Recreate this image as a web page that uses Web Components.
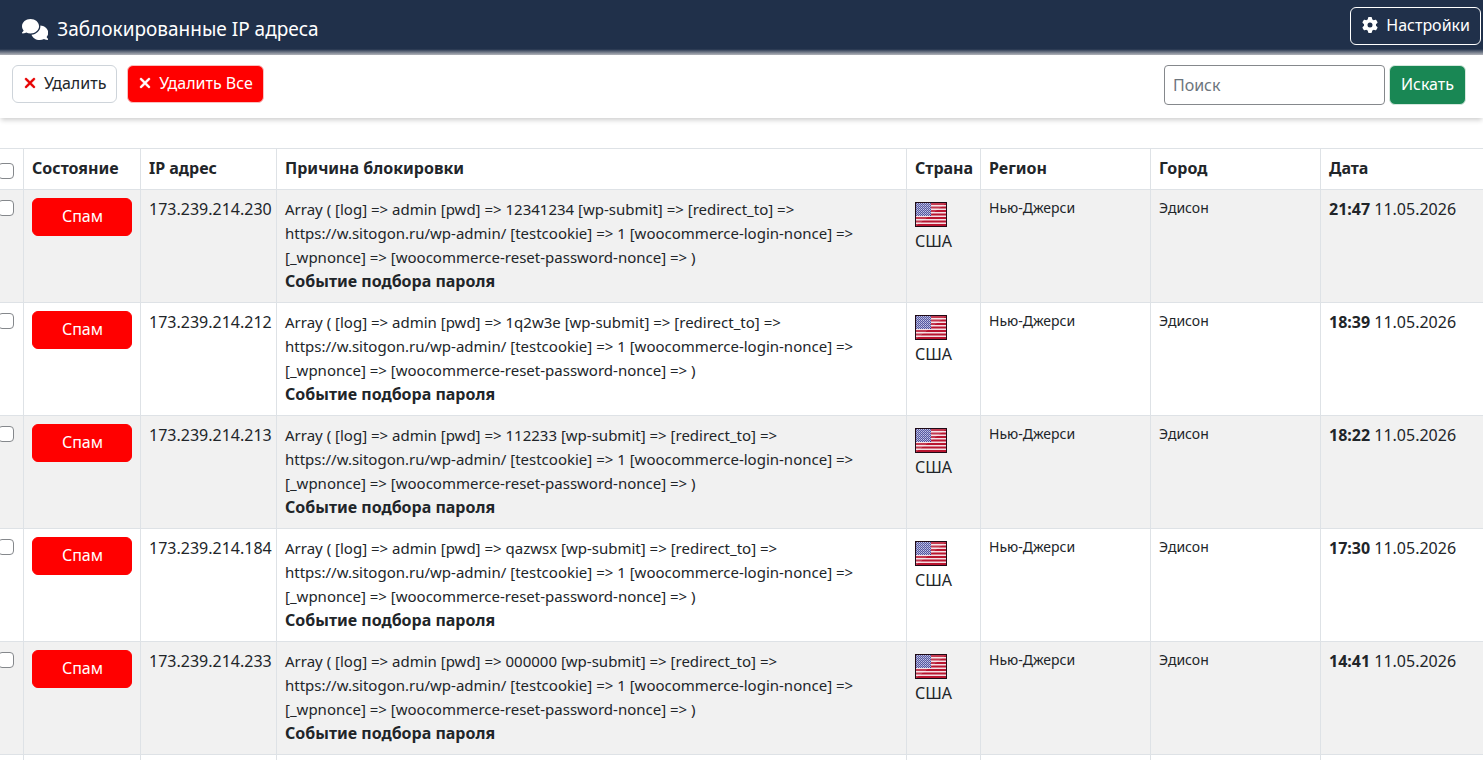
<!DOCTYPE html>
<html lang="ru">
<head>
<meta charset="utf-8">
<meta name="viewport" content="width=device-width, initial-scale=1">
<title>Заблокированные IP адреса</title>
<style>
  body {
    margin: 0;
    background: #fff;
    color: #212529;
    font: 16px/24px "Noto Sans", "Liberation Sans", sans-serif;
  }
</style>
</head>
<body>
<blocked-ip-page></blocked-ip-page>

<script>
const define = (name, html, setup) => {
  const template = document.createElement('template');
  template.innerHTML = html;
  customElements.define(name, class extends HTMLElement {
    constructor() {
      super();
      this.attachShadow({ mode: 'open' }).append(template.content.cloneNode(true));
    }
    connectedCallback() {
      if (setup) setup(this, this.shadowRoot);
    }
  });
};

/* Icons */
const icons = {
  comments: ['0 0 640 512', 'M208 352c114.9 0 208-78.8 208-176S322.9 0 208 0S0 78.800 0 176c0 38.600 14.700 74.300 39.600 103.400c-3.500 9.400-8.700 17.700-14.200 24.700c-4.800 6.200-9.700 11-13.300 14.300c-1.800 1.600-3.300 2.900-4.300 3.700c-.5 .4-.9 .7-1.100 .8l-.2 .2C1 327.200-1.400 334.400 .8 340.900S9.100 352 16 352c21.800 0 43.800-5.600 62.100-12.500c9.200-3.500 17.800-7.400 25.200-11.400C134.100 343.300 169.800 352 208 352zM448 176c0 112.300-99.100 196.900-216.500 207C255.800 457.400 336.400 512 432 512c38.200 0 73.900-8.700 104.700-23.900c7.500 4 16 7.900 25.200 11.400c18.300 6.900 40.300 12.500 62.100 12.500c6.900 0 13.100-4.500 15.200-11.100c2.100-6.600-.2-13.800-5.800-17.900l-.2-.2c-.2-.2-.6-.4-1.100-.8c-1-.8-2.500-2-4.300-3.700c-3.600-3.300-8.500-8.100-13.300-14.300c-5.500-7-10.700-15.400-14.200-24.700c24.900-29 39.600-64.700 39.600-103.400c0-92.800-84.900-168.900-192.600-175.500c.4 5.100 .6 10.300 .6 15.500z'],
  gear: ['0 0 512 512', 'M495.900 166.600c3.200 8.700 .5 18.400-6.400 24.600l-43.300 39.400c1.100 8.300 1.700 16.800 1.700 25.400s-.6 17.100-1.700 25.400l43.300 39.400c6.900 6.200 9.600 15.900 6.400 24.600c-4.400 11.900-9.700 23.300-15.800 34.300l-4.700 8.100c-6.600 11-14 21.400-22.100 31.200c-5.900 7.200-15.700 9.600-24.500 6.800l-55.700-17.700c-13.400 10.300-28.200 18.900-44 25.400l-12.500 57.100c-2 9.100-9 16.300-18.200 17.800c-13.800 2.300-28 3.500-42.500 3.500s-28.700-1.200-42.500-3.500c-9.200-1.500-16.200-8.700-18.200-17.800l-12.500-57.100c-15.800-6.500-30.600-15.100-44-25.400L83.100 425.900c-8.800 2.800-18.600 .3-24.500-6.800c-8.100-9.800-15.500-20.200-22.100-31.200l-4.700-8.100c-6.100-11-11.400-22.400-15.800-34.300c-3.200-8.700-.5-18.400 6.400-24.600l43.300-39.400C64.600 273.100 64 264.600 64 256s.6-17.100 1.700-25.400L22.400 191.200c-6.900-6.200-9.600-15.900-6.400-24.600c4.400-11.900 9.700-23.300 15.800-34.300l4.700-8.100c6.600-11 14-21.400 22.100-31.200c5.900-7.200 15.700-9.600 24.500-6.800l55.700 17.700c13.400-10.300 28.200-18.900 44-25.400l12.500-57.100c2-9.100 9-16.300 18.200-17.800C227.300 1.200 241.500 0 256 0s28.700 1.200 42.500 3.500c9.200 1.500 16.200 8.700 18.200 17.800l12.500 57.100c15.800 6.500 30.600 15.100 44 25.400l55.700-17.700c8.800-2.800 18.600-.3 24.500 6.800c8.100 9.800 15.500 20.200 22.100 31.200l4.700 8.100c6.100 11 11.400 22.400 15.800 34.300zM256 336a80 80 0 1 0 0-160 80 80 0 1 0 0 160z'],
  cross: ['0 0 384 512', 'M342.600 150.600c12.500-12.500 12.500-32.800 0-45.300s-32.800-12.500-45.300 0L192 210.700 86.600 105.400c-12.500-12.500-32.800-12.500-45.300 0s-12.500 32.800 0 45.300L146.700 256 41.400 361.400c-12.500 12.500-12.500 32.800 0 45.300s32.800 12.500 45.300 0L192 301.300 297.400 406.600c12.500 12.500 32.800 12.500 45.300 0s12.500-32.800 0-45.300L237.300 256 342.600 150.600z'],
};
define('ui-icon', `
  <style>
    :host { display: inline-flex; flex: none; }
    svg { display: block; height: var(--icon-size, 16px); fill: currentColor; }
    :host([name=cross]) path { stroke: currentColor; stroke-width: 16; }
  </style>
  <svg aria-hidden="true"><path/></svg>`, (host, root) => {
  const [box, path] = icons[host.getAttribute('name')];
  root.querySelector('svg').setAttribute('viewBox', box);
  root.querySelector('path').setAttribute('d', path);
});

/* Button: variants light, danger, status, outline, success */
define('ui-button', `
  <style>
    :host { display: inline-flex; }
    button {
      display: flex; align-items: center; justify-content: center; gap: 8px;
      flex: 1; margin: 0; padding: 5px 10px 7px 11px;
      font: inherit; line-height: 24px; color: #212529; white-space: nowrap;
      background: #fff; border: 1px solid #ced4da; border-radius: 6px; cursor: pointer;
    }
    :host([variant=light]) ::slotted(ui-icon) { color: #e60000; }
    :host([variant=danger]) button { background: #f00; border-color: #f9c0c0; color: #fff; }
    :host([variant=status]) button { background: #f00; border-color: #f00; color: #fff; }
    :host([variant=outline]) button { background: transparent; border-color: #fff; color: #fff; }
    :host([variant=success]) button { background: #198754; border-color: #d5e8de; color: #fff; padding: 6px 11px 8px; }
  </style>
  <button type="button"><slot name="icon"></slot><slot></slot></button>`);

define('page-header', `
  <style>
    :host {
      display: flex; align-items: flex-start; justify-content: space-between;
      box-sizing: border-box; min-height: 55px; padding: 7px 2px 10px 22px;
      background: linear-gradient(to top, #b4b6bc, #20304a 6px); color: #fff;
    }
    .title { display: flex; align-items: center; gap: 9px; padding-top: 7px; --icon-size: 21px; }
    h1 { margin: 0; font-size: 19px; line-height: 30px; font-weight: 400; }
  </style>
  <div class="title"><ui-icon name="comments"></ui-icon><h1><slot></slot></h1></div>
  <slot name="action"></slot>`);

define('tool-bar', `
  <style>
    :host {
      display: flex; align-items: flex-start; justify-content: space-between;
      padding: 10px 17px 13px 12px;
      box-shadow: 0 3px 5px -1px rgba(0, 0, 0, .2);
    }
    .actions { display: flex; gap: 10px; }
    form { display: flex; gap: 4px; margin: 0; }
    input {
      box-sizing: border-box; width: 221px; height: 40px; margin: 0; padding: 0 8px;
      font: inherit; color: #212529; background: #fff;
      border: 1px solid #85888c; border-radius: 4px;
    }
    input::placeholder { color: #6c757d; opacity: 1; }
  </style>
  <div class="actions">
    <ui-button variant="light"><ui-icon slot="icon" name="cross"></ui-icon>Удалить</ui-button>
    <ui-button variant="danger"><ui-icon slot="icon" name="cross"></ui-icon>Удалить Все</ui-button>
  </div>
  <form>
    <input type="search" name="q" placeholder="Поиск" aria-label="Поиск">
    <ui-button variant="success">Искать</ui-button>
  </form>`);

define('country-flag', `
  <style>
    :host { display: block; }
    svg { display: block; }
  </style>
  <svg width="32" height="32" viewBox="0 0 32 32" aria-hidden="true">
    <defs>
      <pattern id="stars" width="2" height="2" patternUnits="userSpaceOnUse">
        <rect width="2" height="2" fill="#34368c"/>
        <rect width="1" height="1" fill="#b9bbe2"/><rect x="1" y="1" width="1" height="1" fill="#8f92cb"/>
      </pattern>
      <linearGradient id="gloss" x1="0" y1="0" x2="1" y2="1">
        <stop offset="0" stop-color="#fff" stop-opacity=".2"/>
        <stop offset=".5" stop-color="#fff" stop-opacity=".15"/>
        <stop offset=".51" stop-color="#fff" stop-opacity="0"/>
      </linearGradient>
    </defs>
    <rect y="5" width="32" height="25" fill="#1f0a16"/>
    <rect x="1" y="6" width="30" height="23" fill="#f3dfe4"/>
    <path d="M1 7h30M1 10.500h30M1 14h30M1 17.500h30M1 21h30M1 24.500h30M1 28h30" stroke="#b8142f" stroke-width="2"/>
    <rect x="1" y="6" width="15" height="13" fill="url(#stars)"/>
    <rect x="1" y="6" width="30" height="23" fill="url(#gloss)"/>
  </svg>`);

/* Table of blocked addresses */
const entries = [
  ['173.239.214.230', '12341234', '21:47'],
  ['173.239.214.212', '1q2w3e', '18:39'],
  ['173.239.214.213', '112233', '18:22'],
  ['173.239.214.184', 'qazwsx', '17:30'],
  ['173.239.214.233', '000000', '14:41'],
];
define('ip-table', `
  <style>
    :host { display: block; margin: 30px -12px 0 -11px; }
    table { width: 100%; table-layout: fixed; border-collapse: collapse; }
    th, td { padding: 7px 8px 9px; border: 1px solid #dee2e6; text-align: left; vertical-align: top; }
    th { font-weight: 700; }
    tbody tr:nth-child(odd) { background: #f1f1f1; }
    .check { width: 17px; } .state { width: 100px; } .ip { width: 119px; }
    .country { width: 57px; } .place { width: 153px; } .date { width: 157px; }
    td.place { font-size: 14px; line-height: 22px; }
    p { margin: 0; max-width: 600px; font-size: 15px; line-height: 24px; }
    b { font-size: 16px; }
    ui-button { display: flex; margin-top: 1px; }
    input {
      appearance: none; display: block; box-sizing: border-box; width: 16px; height: 16px; margin: 3px 0 0;
      background: #fff; border: 1px solid #85888c; border-radius: 4px;
    }
    th input { margin-top: 7px; }
  </style>
  <table>
    <thead>
      <tr>
        <th class="check"><input type="checkbox" aria-label="Выбрать все"></th>
        <th class="state">Состояние</th>
        <th class="ip">IP адрес</th>
        <th>Причина блокировки</th>
        <th class="country">Страна</th>
        <th class="place">Регион</th>
        <th class="place">Город</th>
        <th class="date">Дата</th>
      </tr>
    </thead>
    <tbody></tbody>
  </table>`, (host, root) => {
  root.querySelector('tbody').innerHTML = entries.map(([ip, password, time]) => `
    <tr>
      <td><input type="checkbox" aria-label="${ip}"></td>
      <td><ui-button variant="status">Спам</ui-button></td>
      <td>${ip}</td>
      <td><p>Array ( [log] =&gt; admin [pwd] =&gt; ${password} [wp-submit] =&gt; [redirect_to] =&gt; https://w.sitogon.ru/wp-admin/ [testcookie] =&gt; 1 [woocommerce-login-nonce] =&gt; [_wpnonce] =&gt; [woocommerce-reset-password-nonce] =&gt; )<br><b>Событие подбора пароля</b></p></td>
      <td><country-flag></country-flag>США</td>
      <td class="place">Нью-Джерси</td>
      <td class="place">Эдисон</td>
      <td><b>${time}</b> 11.05.2026</td>
    </tr>`).join('') + `<tr>${'<td></td>'.repeat(8)}</tr>`;
});

define('blocked-ip-page', `
  <style>:host { display: block; height: 100vh; overflow: hidden; }</style>
  <page-header>Заблокированные IP адреса
    <ui-button slot="action" variant="outline"><ui-icon slot="icon" name="gear"></ui-icon>Настройки</ui-button>
  </page-header>
  <tool-bar></tool-bar>
  <ip-table></ip-table>`);
</script>
</body>
</html>
